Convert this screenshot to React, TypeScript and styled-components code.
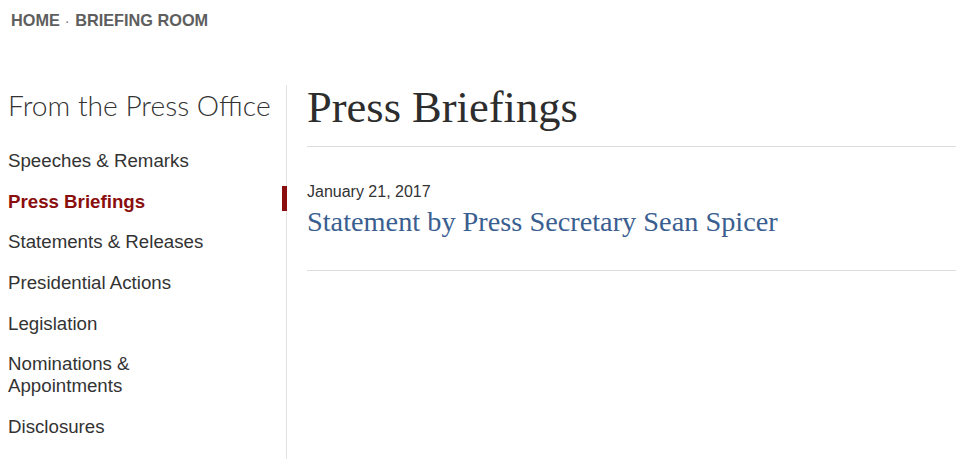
import React from 'react';
import styled, {createGlobalStyle} from 'styled-components';

const Global = createGlobalStyle`
  html, body {
    margin: 0;
    padding: 0;
    background: #fff;
  }
  body {
    font-family: 'Liberation Sans', Arial, sans-serif;
    color: #333;
  }
`;

const Page = styled.div`
  width: 956px;
  height: 459px;
  overflow: hidden;
`;

const Breadcrumb = styled.nav`
  display: flex;
  align-items: flex-start;
  gap: 6px;
  padding: 11px 0 0 11px;
  height: 74px;
  box-sizing: border-box;
  font-size: 16.3px;
  font-weight: bold;
  color: #5e5e5e;
  text-transform: uppercase;
`;

const Sep = styled.span`
  font-size: 10px;
  line-height: 18px;
  padding-top: 3px;
  color: #777;
`;

const Body = styled.div`
  display: flex;
  margin-top: 11px;
`;

const Sidebar = styled.aside`
  width: 287px;
  box-sizing: border-box;
  padding-left: 8px;
  border-right: 1px solid #e2e2e2;
  min-height: 400px;
`;

const SideTitle = styled.h2`
  margin: 0;
  padding-top: 3px;
  font-family: Lato, 'Open Sans', sans-serif;
  font-weight: 300;
  font-size: 28.2px;
  line-height: 34px;
  color: #333;
`;

const NavList = styled.ul`
  list-style: none;
  margin: 19px 0 0;
  padding: 0;
`;

const NavItem = styled.li<{active?: boolean}>`
  position: relative;
  font-size: 18.7px;
  line-height: 22px;
  padding: 9px 0 9.7px;
  font-weight: ${p => (p.active ? 'bold' : 'normal')};
  color: ${p => (p.active ? '#8a0e0e' : '#333')};
  &::after {
    content: '';
    display: ${p => (p.active ? 'block' : 'none')};
    position: absolute;
    right: -1px;
    top: 4.5px;
    bottom: 11.2px;
    width: 5px;
    background: #8a0e0e;
  }
`;

const Main = styled.main`
  flex: 1;
  padding-left: 20px;
`;

const Heading = styled.h1`
  margin: 0;
  padding: 0 0 17px;
  font-family: 'Liberation Serif', 'Times New Roman', serif;
  font-weight: normal;
  font-size: 44.5px;
  line-height: 44px;
  color: #2d2d2d;
  border-bottom: 1px solid #dedede;
`;

const Article = styled.article`
  padding: 36px 0 31px;
  border-bottom: 1px solid #dedede;
`;

const DateLine = styled.div`
  font-size: 16px;
  line-height: 18px;
  color: #333;
`;

const ArticleTitle = styled.a`
  display: block;
  margin-top: 4px;
  font-family: 'Liberation Serif', 'Times New Roman', serif;
  font-size: 28.3px;
  line-height: 34px;
  color: #3a5e8f;
  text-decoration: none;
`;

const navItems = [
  'Speeches & Remarks',
  'Press Briefings',
  'Statements & Releases',
  'Presidential Actions',
  'Legislation',
  'Nominations & Appointments',
  'Disclosures',
];

export default function App() {
  return (
    <Page>
      <Global />
      <Breadcrumb>
        <span>Home</span>
        <Sep>·</Sep>
        <span>Briefing Room</span>
      </Breadcrumb>
      <Body>
        <Sidebar>
          <SideTitle>From the Press Office</SideTitle>
          <NavList>
            {navItems.map(item => (
              <NavItem key={item} active={item === 'Press Briefings'}>
                {item === 'Nominations & Appointments' ? (
                  <>
                    Nominations &amp;
                    <br />
                    Appointments
                  </>
                ) : (
                  item
                )}
              </NavItem>
            ))}
          </NavList>
        </Sidebar>
        <Main>
          <Heading>Press Briefings</Heading>
          <Article>
            <DateLine>January 21, 2017</DateLine>
            <ArticleTitle href="#">Statement by Press Secretary Sean Spicer</ArticleTitle>
          </Article>
        </Main>
      </Body>
    </Page>
  );
}
